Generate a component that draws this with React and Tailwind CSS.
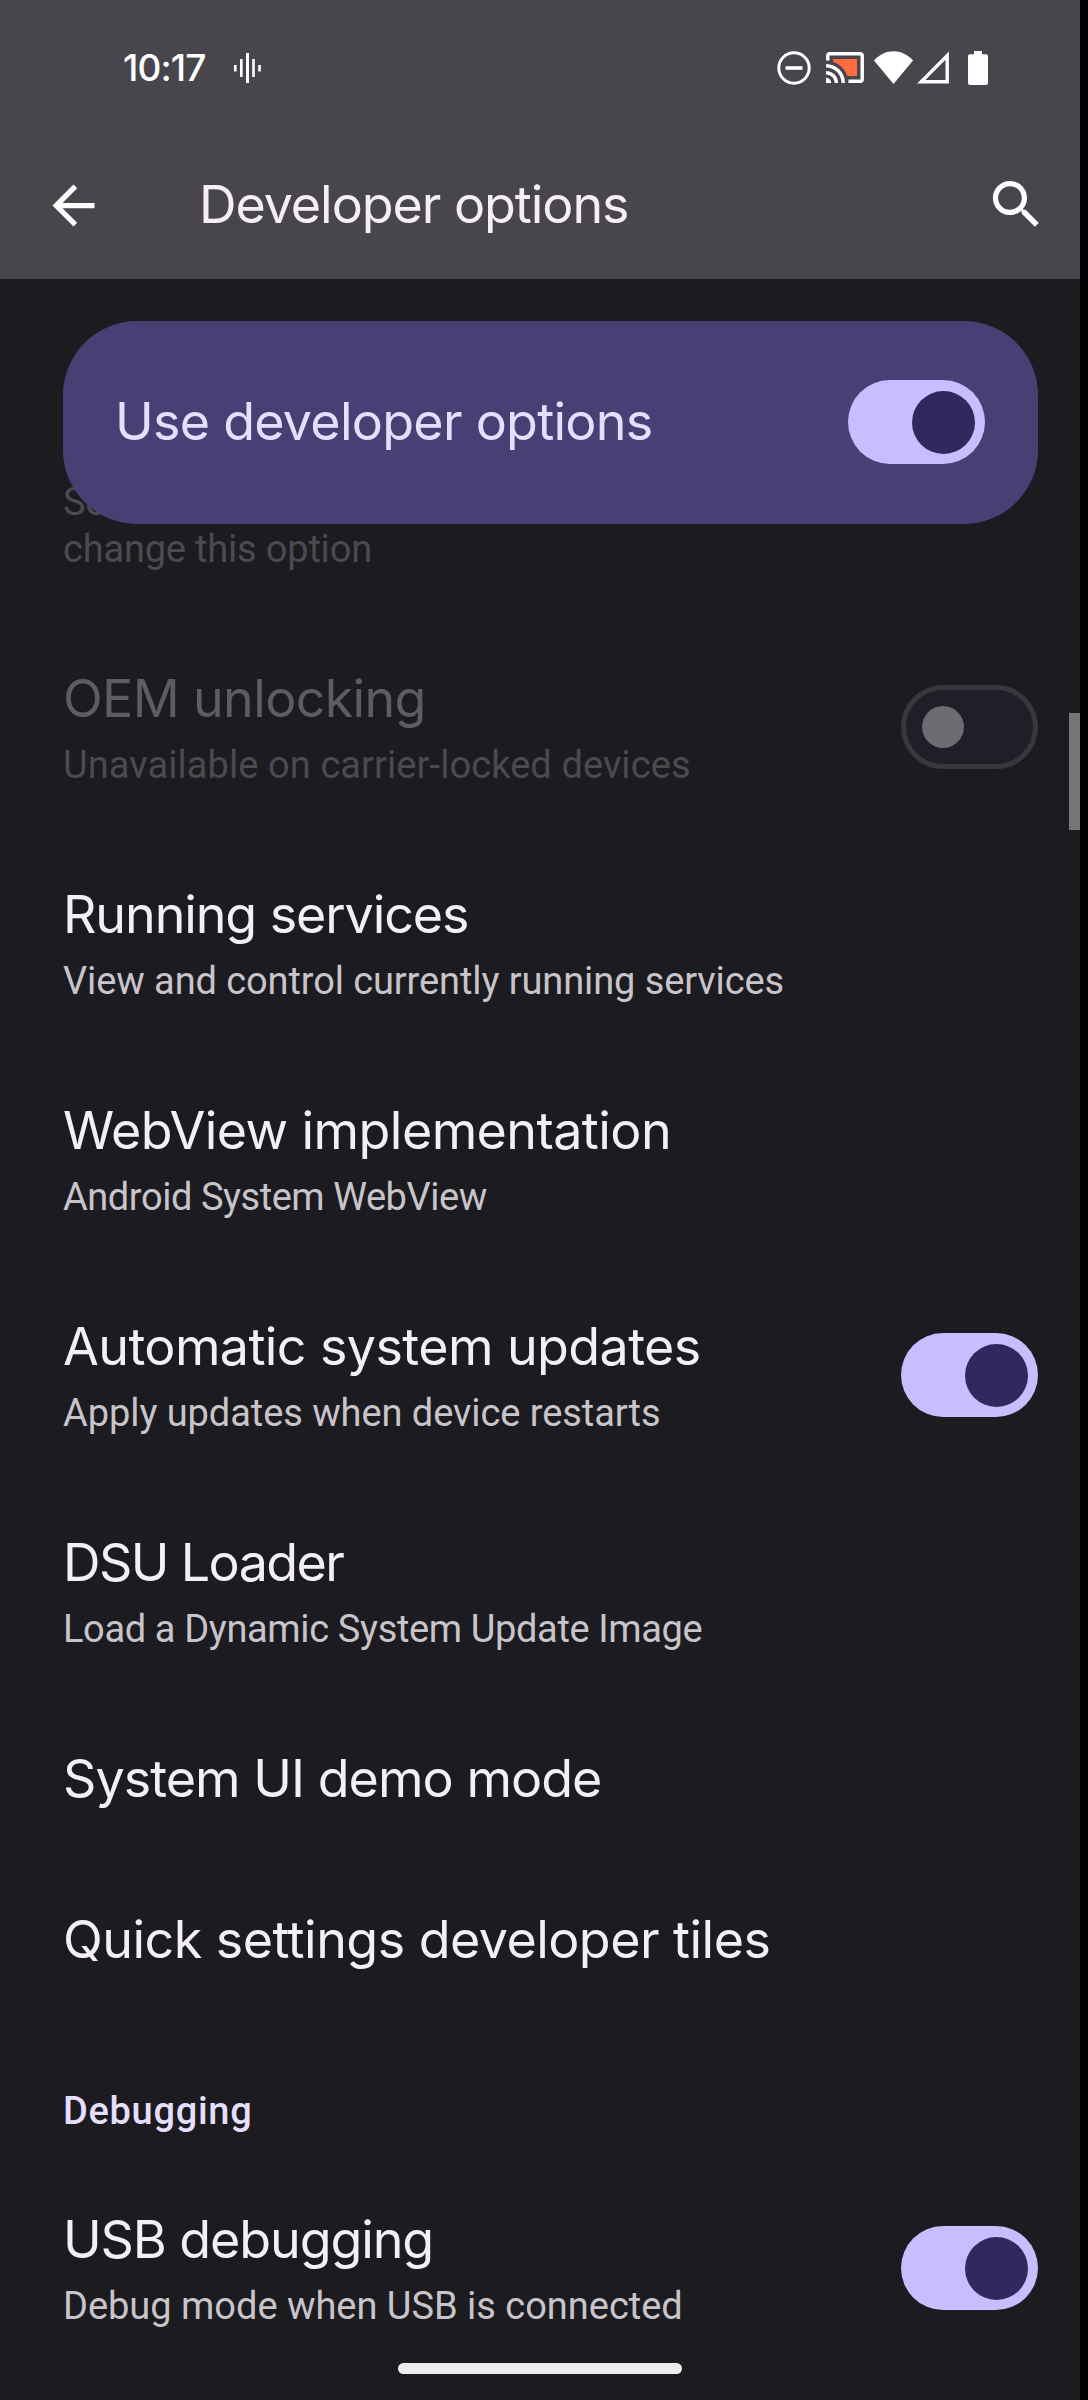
function Toggle({ on, disabled }) {
  if (!on) {
    return (
      <div
        role="switch"
        aria-checked="false"
        aria-disabled={disabled}
        className="flex h-[84px] w-[137px] shrink-0 items-center rounded-full border-[5px] border-[#39373c] bg-[#201e28] pl-4"
      >
        <div className="size-[42px] rounded-full bg-[#6e6b71]" />
      </div>
    );
  }
  return (
    <div
      role="switch"
      aria-checked="true"
      className="flex h-[84px] w-[137px] shrink-0 items-center justify-end rounded-full bg-[#c8beff] pr-[10.5px]"
    >
      <div className="size-[63px] rounded-full bg-[#31285f]" />
    </div>
  );
}

function StatusBar() {
  return (
    <div className="flex h-[135px] items-center pr-[92px] pl-[123px] text-white">
      <div className="font-['Inter',sans-serif] text-[37px] leading-[46px] font-medium tracking-[-0.9px]">
        10:17
      </div>
      <svg width="28" height="30" viewBox="0 0 28 30" className="ml-[29px]" fill="#fff">
        <rect x="0" y="12" width="2.6" height="6.5" />
        <rect x="6" y="6" width="2.6" height="18" />
        <rect x="12" y="0" width="3" height="30" />
        <rect x="18.2" y="6" width="2.6" height="18" />
        <rect x="24.2" y="12" width="2.6" height="6.5" />
      </svg>
      <div className="ml-auto flex items-center">
        <svg width="34" height="34" viewBox="0 0 34 34" fill="none" stroke="#fff">
          <circle cx="17" cy="17" r="15.2" strokeWidth="3" />
          <path d="M8.5 17h17" strokeWidth="3.6" />
        </svg>
        <svg width="38" height="31" viewBox="1 3 22 18" className="ml-[15px]" fill="#fff">
          <path d="M5 7v1.63c3.96 1.28 7.09 4.41 8.37 8.37H19V7H5z" fill="#ff6d40" />
          <path d="M21 3H3c-1.1 0-2 .9-2 2v3h2V5h18v14h-7v2h7c1.1 0 2-.9 2-2V5c0-1.1-.9-2-2-2zM1 18v3h3c0-1.66-1.34-3-3-3zm0-4v2c2.76 0 5 2.24 5 5h2c0-3.87-3.13-7-7-7zm0-4v2c4.97 0 9 4.03 9 9h2c0-6.08-4.93-11-11-11z" />
        </svg>
        <svg width="39" height="33" viewBox="0 0 39 33" className="ml-[10px]" fill="#fff">
          <path d="M19.5 33 0 9.5C5.5 3.6 12 0.3 19.5 0.3S33.5 3.6 39 9.5z" />
        </svg>
        <svg width="33" height="33" viewBox="0 0 33 33" className="ml-[4px]" fill="none" stroke="#fff">
          <path d="M30.2 4.6V30.8H4.2z" strokeWidth="3.4" />
        </svg>
        <svg width="20" height="34" viewBox="0 0 20 34" className="ml-[18px]" fill="#fff">
          <path d="M6 0h8v3.2h4a2 2 0 0 1 2 2V32a2 2 0 0 1-2 2H2a2 2 0 0 1-2-2V5.2a2 2 0 0 1 2-2h4z" />
        </svg>
      </div>
    </div>
  );
}

function AppBar() {
  return (
    <div className="flex h-[144px] items-start pt-[38px] pr-[32px] pl-[42px]">
      <svg width="63" height="63" viewBox="0 0 24 24" fill="#fff" className="mt-px">
        <path d="M20 11H7.83l5.59-5.59L12 4l-8 8 8 8 1.41-1.41L7.83 13H20v-2z" />
      </svg>
      <h1 className="ml-[94px] font-['Inter',sans-serif] text-[52px] leading-[64px] tracking-[-1.06px] text-[#f3eff4]">
        Developer options
      </h1>
      <svg width="63" height="63" viewBox="0 0 24 24" fill="#fff" className="ml-auto">
        <path d="M15.5 14h-.79l-.28-.27C15.41 12.59 16 11.11 16 9.5 16 5.91 13.09 3 9.5 3S3 5.91 3 9.5 5.91 16 9.5 16c1.61 0 3.09-.59 4.23-1.57l.27.28v.79l5 4.99L20.49 19l-4.99-5zm-6 0C7.01 14 5 11.99 5 9.5S7.01 5 9.5 5 14 7.01 14 9.5 11.99 14 9.5 14z" />
      </svg>
    </div>
  );
}

function Row({ title, titleTracking, sub, subTracking, disabled, toggle }) {
  return (
    <div className={`flex items-center justify-between pt-12 pr-[42px] pl-[63px] ${sub ? "pb-[47px]" : "pb-[51px]"}`}>
      <div>
        <div
          className={`font-['Inter',sans-serif] text-[52px] leading-[62px] whitespace-nowrap ${titleTracking} ${disabled ? "text-[#5e5c61]" : "text-[#f3eff4]"}`}
        >
          {title}
        </div>
        {sub && (
          <div
            className={`mt-3 text-[38px] leading-[47px] whitespace-nowrap ${subTracking} ${disabled ? "text-[#4c4a4f]" : "text-[#c8c4c9]"}`}
          >
            {sub}
          </div>
        )}
      </div>
      {toggle && (
        <div className="-mt-[3px]">
          <Toggle on={toggle === "on"} disabled={disabled} />
        </div>
      )}
    </div>
  );
}

const rows = [
  {
    title: "OEM unlocking",
    titleTracking: "tracking-[-0.65px]",
    sub: "Unavailable on carrier-locked devices",
    subTracking: "tracking-[0.08px]",
    disabled: true,
    toggle: "off",
  },
  {
    title: "Running services",
    titleTracking: "tracking-[-1.1px]",
    sub: "View and control currently running services",
    subTracking: "tracking-[-0.1px]",
  },
  {
    title: "WebView implementation",
    titleTracking: "tracking-[-0.57px]",
    sub: "Android System WebView",
    subTracking: "tracking-[-0.45px]",
  },
  {
    title: "Automatic system updates",
    titleTracking: "tracking-[-0.6px]",
    sub: "Apply updates when device restarts",
    subTracking: "tracking-[-0.07px]",
    toggle: "on",
  },
  {
    title: "DSU Loader",
    titleTracking: "tracking-[-1.6px]",
    sub: "Load a Dynamic System Update Image",
    subTracking: "tracking-[-0.36px]",
  },
  { title: "System UI demo mode", titleTracking: "tracking-[-0.96px]" },
  { title: "Quick settings developer tiles", titleTracking: "tracking-[-0.54px]" },
];

export default function App() {
  return (
    <div className="h-[2400px] w-[1088px] overflow-hidden bg-black font-['Roboto',sans-serif]">
      <div className="relative h-full w-[1080px] overflow-hidden bg-[#1c1b1f]">
        <header className="h-[279px] bg-[#49454c]">
          <StatusBar />
          <AppBar />
        </header>

        <main className="pt-[42px]">
          <div className="relative z-10 mr-[42px] ml-[63px] flex h-[203px] items-center justify-between rounded-[74px] bg-[#493f74] pr-[53px] pb-px pl-[52px]">
            <div className="font-['Inter',sans-serif] text-[52px] leading-[62px] tracking-[-0.73px] text-[#e5deff]">
              Use developer options
            </div>
            <Toggle on />
          </div>

          <div className="-mt-[45px] pb-[47px] pl-[63px] text-[38px] leading-[47px] tracking-[-0.19px] text-[#4c4a4f]">
            <div>Se</div>
            <div>change this option</div>
          </div>

          {rows.map((row) => (
            <Row key={row.title} {...row} />
          ))}

          <h2 className="pt-[66px] pb-[26px] pl-[63px] text-[38px] leading-[47px] font-medium tracking-[0.7px] text-[#e5deff]">
            Debugging
          </h2>

          <Row
            title="USB debugging"
            titleTracking="tracking-[-1.1px]"
            sub="Debug mode when USB is connected"
            subTracking="tracking-[-0.02px]"
            toggle="on"
          />
        </main>

        <div className="absolute top-[713px] right-0 h-[117px] w-[11px] bg-[#77747a]" />
        <div className="absolute top-[2363px] left-[398px] h-[11px] w-[284px] rounded-full bg-[#ededed]" />
      </div>
    </div>
  );
}
